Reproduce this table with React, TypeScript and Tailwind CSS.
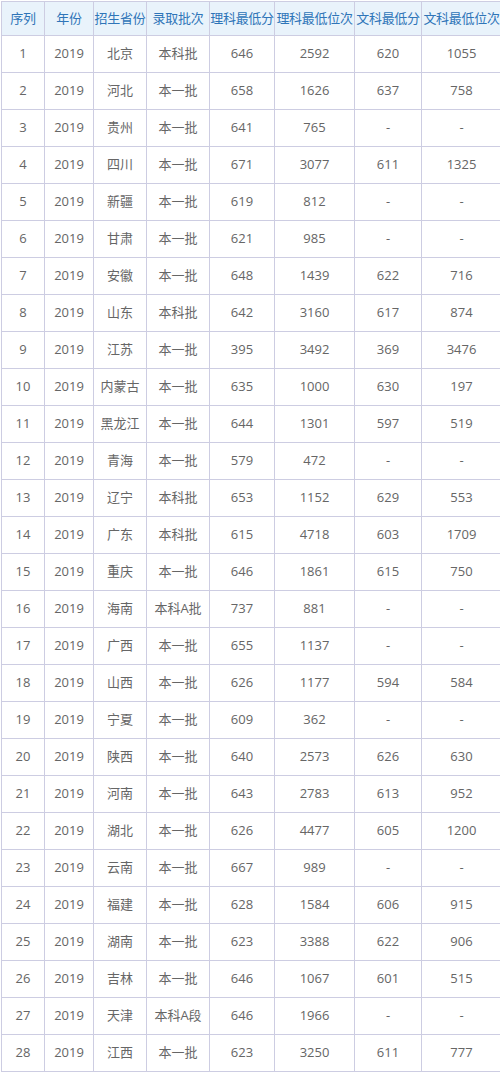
import React from "react";

const rows: [string, string, string, string, string, string, string][] = [
  ["北京", "本科批", "646", "2592", "620", "1055"],
  ["河北", "本一批", "658", "1626", "637", "758"],
  ["贵州", "本一批", "641", "765", "-", "-"],
  ["四川", "本一批", "671", "3077", "611", "1325"],
  ["新疆", "本一批", "619", "812", "-", "-"],
  ["甘肃", "本一批", "621", "985", "-", "-"],
  ["安徽", "本一批", "648", "1439", "622", "716"],
  ["山东", "本科批", "642", "3160", "617", "874"],
  ["江苏", "本一批", "395", "3492", "369", "3476"],
  ["内蒙古", "本一批", "635", "1000", "630", "197"],
  ["黑龙江", "本一批", "644", "1301", "597", "519"],
  ["青海", "本一批", "579", "472", "-", "-"],
  ["辽宁", "本科批", "653", "1152", "629", "553"],
  ["广东", "本科批", "615", "4718", "603", "1709"],
  ["重庆", "本一批", "646", "1861", "615", "750"],
  ["海南", "本科A批", "737", "881", "-", "-"],
  ["广西", "本一批", "655", "1137", "-", "-"],
  ["山西", "本一批", "626", "1177", "594", "584"],
  ["宁夏", "本一批", "609", "362", "-", "-"],
  ["陕西", "本一批", "640", "2573", "626", "630"],
  ["河南", "本一批", "643", "2783", "613", "952"],
  ["湖北", "本一批", "626", "4477", "605", "1200"],
  ["云南", "本一批", "667", "989", "-", "-"],
  ["福建", "本一批", "628", "1584", "606", "915"],
  ["湖南", "本一批", "623", "3388", "622", "906"],
  ["吉林", "本一批", "646", "1067", "601", "515"],
  ["天津", "本科A段", "646", "1966", "-", "-"],
  ["江西", "本一批", "623", "3250", "611", "777"],
] as any;

const headers = ["序列", "年份", "招生省份", "录取批次", "理科最低分", "理科最低位次", "文科最低分", "文科最低位次"];
const widths = ["w-[43px]", "w-[49px]", "w-[53px]", "w-[63px]", "w-[65px]", "w-[80px]", "w-[67px]", "w-[80px]"];

export default function App() {
  return (
    <div className="w-[500px] h-[1073px] bg-white overflow-hidden pt-[1px] pl-[1px]" style={{ fontFamily: '"Open Sans", "Noto Sans CJK SC", sans-serif' }}>
      <table className="table-fixed border-collapse w-[500px] text-[13px]">
        <colgroup>
          {widths.map((w, i) => (
            <col key={i} className={w} />
          ))}
        </colgroup>
        <thead>
          <tr className="h-[34px] bg-[#e9f3fb]">
            {headers.map((h) => (
              <th key={h} className="border border-[#cdcde2] font-normal text-[#2f75b8] text-center whitespace-nowrap p-0 tracking-[-0.3px]">
                {h}
              </th>
            ))}
          </tr>
        </thead>
        <tbody>
          {rows.map((r, i) => (
            <tr key={i} className="h-[37px]">
              <td className="border border-[#cdcde2] text-center text-[#666] p-0">{i + 1}</td>
              <td className="border border-[#cdcde2] text-center text-[#666] p-0">2019</td>
              {r.map((c: string, j: number) => (
                <td key={j} className="border border-[#cdcde2] text-center text-[#666] p-0 whitespace-nowrap">
                  {c}
                </td>
              ))}
            </tr>
          ))}
        </tbody>
      </table>
    </div>
  );
}
